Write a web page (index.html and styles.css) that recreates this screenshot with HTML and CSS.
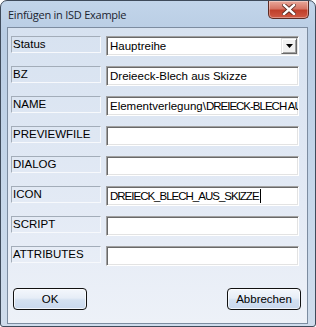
FILE: index.html
```html
<!DOCTYPE html>
<html lang="de">
<head>
    <meta charset="UTF-8">
    <title>Einfügen in ISD Example</title>
    <link rel="stylesheet" href="styles.css">
</head>
<body>
    <div class="window">
        <div class="titlebar">
            <span class="title">Einfügen in ISD Example</span>
            <div class="close">
                <svg width="14" height="11" viewBox="0 0 14 11">
                    <path d="M2 1 L12 10 M12 1 L2 10" stroke="#5a2a22" stroke-width="4.2" stroke-linecap="square"/>
                    <path d="M2 1 L12 10 M12 1 L2 10" stroke="#ffffff" stroke-width="2.4" stroke-linecap="square"/>
                </svg>
            </div>
        </div>
        <div class="client">
            <div class="fields">
                <div class="label">Status</div>
                <div class="field select">
                    <span class="value">Hauptreihe</span>
                    <span class="arrow">
                        <svg width="7" height="4" viewBox="0 0 7 4"><path d="M0 0 H7 L3.5 4 Z" fill="#000"/></svg>
                    </span>
                </div>

                <div class="label">BZ</div>
                <div class="field"><span class="value">Dreieeck-Blech aus Skizze</span></div>

                <div class="label">NAME</div>
                <div class="field"><span class="value">Elementverlegung\<span class="caps">DREIECK-BLECH AUS SKIZZE</span></span></div>

                <div class="label">PREVIEWFILE</div>
                <div class="field"></div>

                <div class="label">DIALOG</div>
                <div class="field"></div>

                <div class="label">ICON</div>
                <div class="field"><span class="value caps">DREIECK_BLECH_AUS_SKIZZE</span><span class="caret"></span></div>

                <div class="label">SCRIPT</div>
                <div class="field"></div>

                <div class="label">ATTRIBUTES</div>
                <div class="field"></div>
            </div>
            <div class="buttons">
                <button class="btn">OK</button>
                <button class="btn">Abbrechen</button>
            </div>
        </div>
    </div>
</body>
</html>
```

FILE: styles.css
```css
* {
    margin: 0;
    padding: 0;
    box-sizing: border-box;
}

body {
    background: #ffffff;
    font-family: 'Liberation Sans', Arial, sans-serif;
    font-size: 11.5px;
    color: #000;
}

.window {
    width: 316px;
    height: 327px;
    display: flex;
    flex-direction: column;
    padding: 0 7px 2px 6px;
    border: 1px solid #3f4b5b;
    border-radius: 7px 7px 3px 3px;
    background: linear-gradient(180deg, #c2d5ea 0%, #b9cde4 10%, #c6d7ea 60%, #cfdcec 100%);
}

.titlebar {
    height: 26px;
    display: flex;
    align-items: flex-start;
    justify-content: space-between;
}

.title {
    font-family: 'Open Sans', 'Noto Sans', sans-serif;
    font-size: 11px;
    letter-spacing: -0.25px;
    color: #1b2430;
    margin: 6px 0 0 1px;
}

.close {
    width: 41px;
    height: 18px;
    margin-right: -1px;
    display: flex;
    align-items: center;
    justify-content: center;
    border: 1px solid #5c2b24;
    border-top: none;
    border-radius: 0 0 5px 5px;
    background: linear-gradient(180deg, #e9a99b 0%, #d67565 45%, #c03f2a 55%, #cf5a45 100%);
    box-shadow: inset 0 0 0 1px rgba(255, 255, 255, 0.35);
}

.client {
    flex: 1;
    display: flex;
    flex-direction: column;
    border: 1px solid #7c8ca0;
    background: linear-gradient(180deg, #d7e2f0 0%, #e3eaf5 60%, #edf1f8 100%);
}

.fields {
    display: grid;
    grid-template-columns: 90px 193px;
    grid-auto-rows: 20px;
    column-gap: 5px;
    row-gap: 10px;
    margin: 8px 0 0 3px;
}

.label {
    height: 17px;
    line-height: 15px;
    padding-left: 1px;
    border: 1px solid;
    border-color: #a3adb9 #f7f9fc #f7f9fc #a3adb9;
    white-space: nowrap;
    overflow: hidden;
}

.field {
    position: relative;
    height: 20px;
    background: #fff;
    border: 1px solid;
    border-color: #a0a0a0 #ffffff #ffffff #a0a0a0;
    box-shadow: inset 1px 1px 0 #696969, inset -1px -1px 0 #e3e3e3;
    padding: 0 3px 0 3px;
    line-height: 18px;
    overflow: hidden;
    white-space: nowrap;
}

.caps {
    letter-spacing: -1px;
}

.caret {
    display: inline-block;
    width: 1px;
    height: 14px;
    margin-left: 1px;
    background: #000;
    vertical-align: -3px;
}

.select .arrow {
    position: absolute;
    top: 1px;
    right: 1px;
    width: 16px;
    height: 16px;
    display: flex;
    align-items: center;
    justify-content: center;
    background: #f0f0f0;
    border: 1px solid;
    border-color: #e3e3e3 #696969 #696969 #e3e3e3;
    box-shadow: inset 1px 1px 0 #ffffff, inset -1px -1px 0 #a0a0a0;
}

.buttons {
    display: flex;
    justify-content: space-between;
    margin-top: 22px;
    padding: 0 6px 0 5px;
}

.btn {
    width: 74px;
    height: 22px;
    font-family: 'Liberation Sans', Arial, sans-serif;
    font-size: 11.5px;
    color: #000;
    border: 1px solid #111;
    border-radius: 4px;
    background: linear-gradient(180deg, #f4f7fc 0%, #e6edf7 45%, #d4e1f1 55%, #c8d8ee 100%);
    box-shadow: inset 0 0 0 1px rgba(255, 255, 255, 0.7);
}
```
